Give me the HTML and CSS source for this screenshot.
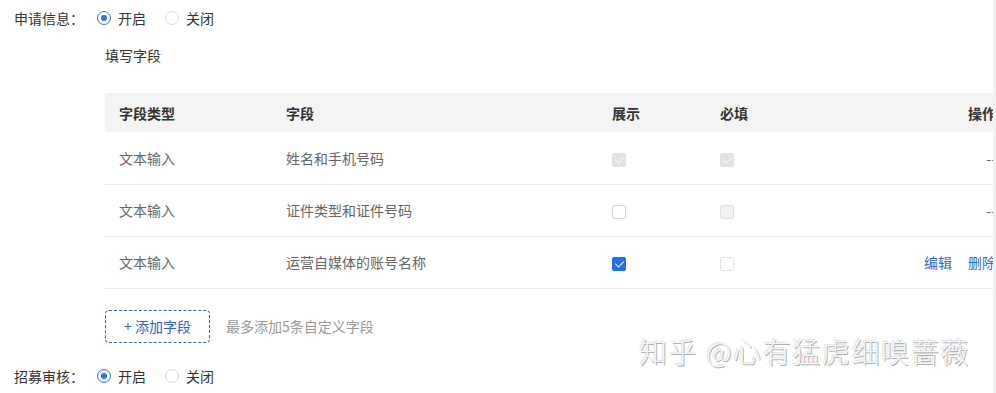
FILE: index.html
```html
<!DOCTYPE html>
<html lang="zh-CN">
<head>
    <meta charset="UTF-8">
    <meta name="viewport" content="width=device-width, initial-scale=1.0">
    <title>申请信息</title>
    <link rel="stylesheet" href="styles.css">
</head>
<body>
    <div class="page">
        <div class="content">
            <div class="form_row">
                <div class="label">申请信息：</div>
                <div class="radios">
                    <span class="radio on"></span><span class="radio_text">开启</span>
                    <span class="radio"></span><span class="radio_text">关闭</span>
                </div>
            </div>

            <div class="fields">
                <div class="fields_title">填写字段</div>
                <table class="field_table">
                    <colgroup>
                        <col style="width:167px">
                        <col style="width:326px">
                        <col style="width:108px">
                        <col style="width:150px">
                        <col>
                    </colgroup>
                    <thead>
                        <tr>
                            <th>字段类型</th>
                            <th>字段</th>
                            <th>展示</th>
                            <th>必填</th>
                            <th class="op">操作</th>
                        </tr>
                    </thead>
                    <tbody>
                        <tr>
                            <td>文本输入</td>
                            <td>姓名和手机号码</td>
                            <td><span class="check disabled checked"></span></td>
                            <td><span class="check disabled checked"></span></td>
                            <td class="op dash">--</td>
                        </tr>
                        <tr>
                            <td>文本输入</td>
                            <td>证件类型和证件号码</td>
                            <td><span class="check"></span></td>
                            <td><span class="check disabled"></span></td>
                            <td class="op dash">--</td>
                        </tr>
                        <tr>
                            <td>文本输入</td>
                            <td>运营自媒体的账号名称</td>
                            <td><span class="check checked"></span></td>
                            <td><span class="check light"></span></td>
                            <td class="op"><a class="link">编辑</a><a class="link">删除</a></td>
                        </tr>
                    </tbody>
                </table>
                <div class="add_row">
                    <div class="add_btn">+ 添加字段</div>
                    <div class="hint">最多添加5条自定义字段</div>
                </div>
            </div>

            <div class="form_row second">
                <div class="label">招募审核：</div>
                <div class="radios">
                    <span class="radio on"></span><span class="radio_text">开启</span>
                    <span class="radio"></span><span class="radio_text">关闭</span>
                </div>
            </div>
        </div>
        <div class="scroll_strip"></div>
        <div class="watermark">知乎 @心有猛虎细嗅蔷薇</div>
    </div>
</body>
</html>
```

FILE: styles.css
```css
*{
    margin: 0;
    padding: 0;
    box-sizing: border-box;
    font-family: "Noto Sans CJK SC", "Noto Sans", sans-serif;
}
body{
    width: 996px;
    height: 393px;
    overflow: hidden;
    background: #fff;
    font-size: 14px;
    color: #333;
}
.page{
    position: relative;
    display: flex;
    height: 393px;
}
.content{
    width: 993px;
    overflow: hidden;
    padding-left: 14px;
}
.scroll_strip{
    flex: 1;
    background: #f1f1f1;
}
.form_row{
    height: 36px;
    display: flex;
    align-items: center;
}
.form_row.second{
    margin-top: 15px;
}
.label{
    width: 83px;
    color: #333;
}
.radios{
    display: flex;
    align-items: center;
}
.radio{
    width: 14px;
    height: 14px;
    border-radius: 50%;
    border: 1px solid #dcdcdc;
    background: #fff;
    position: relative;
}
.radio.on{
    border-color: #2b73e6;
}
.radio.on::after{
    content: "";
    position: absolute;
    left: 3px;
    top: 3px;
    width: 6px;
    height: 6px;
    border-radius: 50%;
    background: #2b73e6;
}
.radio_text{
    margin-left: 7px;
    margin-right: 19px;
    color: #333;
}
.fields{
    margin-left: 91px;
}
.fields_title{
    margin-top: 9px;
    line-height: 20px;
    color: #333;
}
.field_table{
    margin-top: 28px;
    width: 905px;
    table-layout: fixed;
    border-collapse: collapse;
}
.field_table th{
    height: 39px;
    background: #f4f4f4;
    text-align: left;
    font-weight: 600;
    color: #333;
    padding: 0 14px;
}
.field_table td{
    height: 52px;
    padding: 0 14px;
    color: #666;
    border-bottom: 1px solid #ebebeb;
    vertical-align: middle;
}
.field_table .op{
    text-align: right;
}
.field_table .dash{
    color: #666;
}
.link{
    color: #2f6cc8;
    margin-left: 16px;
    cursor: pointer;
}
.check{
    display: inline-block;
    vertical-align: middle;
    width: 14px;
    height: 14px;
    border: 1px solid #d4d4d4;
    border-radius: 2px;
    background: #fff;
    position: relative;
}
.check.light{
    border-color: #e3e3e3;
}
.check.disabled{
    background: #f3f3f3;
    border-color: #e0e0e0;
}
.check.checked::after{
    content: "";
    position: absolute;
    left: 4px;
    top: 1px;
    width: 4px;
    height: 7px;
    border-right: 1.5px solid #fff;
    border-bottom: 1.5px solid #fff;
    transform: rotate(45deg);
}
.check.checked{
    background: #1f6fe5;
    border-color: #1f6fe5;
}
.check.disabled.checked{
    background: #e2e2e2;
    border-color: #e2e2e2;
}
.check.disabled.checked::after{
    border-color: #f7f7f7;
}
.add_row{
    margin-top: 21px;
    display: flex;
    align-items: center;
}
.add_btn{
    width: 105px;
    height: 33px;
    border: 1px dashed #2f62c0;
    border-radius: 4px;
    color: #2f62c0;
    display: flex;
    justify-content: center;
    align-items: center;
}
.hint{
    margin-left: 16px;
    color: #999;
}
.watermark{
    position: absolute;
    left: 639px;
    top: 331px;
    font-size: 28px;
    font-weight: 300;
    letter-spacing: 1.6px;
    color: #f7f7f7;
    text-shadow: 1px 1px 0 #b0b0b0, -1px -1px 0 #e6e6e6;
    white-space: nowrap;
}
```
